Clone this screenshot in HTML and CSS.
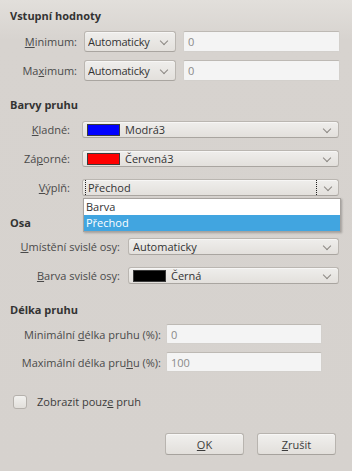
FILE: index.html
```html
<!DOCTYPE html>
<html lang="cs">
<head>
    <meta charset="UTF-8">
    <title>Datové pruhy</title>
    <link rel="stylesheet" href="styles.css">
</head>
<body>
    <div class="dialog">
        <h2 class="heading first">Vstupní hodnoty</h2>
        <div class="grid grid-input">
            <label><u>M</u>inimum:</label>
            <div class="combo"><span class="combo-text">Automaticky</span><span class="arrow"></span></div>
            <div class="field">0</div>

            <label>Ma<u>x</u>imum:</label>
            <div class="combo"><span class="combo-text">Automaticky</span><span class="arrow"></span></div>
            <div class="field">0</div>
        </div>

        <h2 class="heading bars">Barvy pruhu</h2>
        <div class="grid grid-bars">
            <label><u>K</u>ladné:</label>
            <div class="combo"><span class="swatch blue"></span><span class="combo-text">Modrá3</span><span class="arrow"></span></div>

            <label>Zá<u>p</u>orné:</label>
            <div class="combo"><span class="swatch red"></span><span class="combo-text">Červená3</span><span class="arrow"></span></div>

            <label><u>V</u>ýplň:</label>
            <div class="combo focused"><span class="combo-text">Přechod</span><span class="arrow"></span></div>
        </div>

        <h2 class="heading axis">Osa</h2>
        <div class="grid grid-axis">
            <label><u>U</u>místění svislé osy:</label>
            <div class="combo"><span class="combo-text">Automaticky</span><span class="arrow"></span></div>

            <label><u>B</u>arva svislé osy:</label>
            <div class="combo"><span class="swatch black"></span><span class="combo-text">Černá</span><span class="arrow"></span></div>
        </div>

        <h2 class="heading length">Délka pruhu</h2>
        <div class="grid grid-length">
            <label>Minimální <u>d</u>élka pruhu (%):</label>
            <div class="field">0</div>

            <label>Maximální délka pru<u>h</u>u (%):</label>
            <div class="field">100</div>
        </div>

        <div class="check-row">
            <span class="checkbox"></span>
            <span>Zobrazit pouz<u>e</u> pruh</span>
        </div>

        <div class="buttons">
            <button><u>O</u>K</button>
            <button><u>Z</u>rušit</button>
        </div>

        <ul class="popup">
            <li>Barva</li>
            <li class="selected">Přechod</li>
        </ul>
    </div>
</body>
</html>
```

FILE: styles.css
```css
body {
    margin: 0;
    font-family: "Open Sans", "DejaVu Sans", sans-serif;
    font-size: 11px;
    color: #3c3c3c;
    background: linear-gradient(#e2dfdb, #d7d3cf 40px, #d6d2ce);
    height: 471px;
    overflow: hidden;
}

.dialog {
    position: relative;
    padding: 8px 0 0 10px;
}

.heading {
    margin: 0;
    font-size: 11px;
    font-weight: bold;
    line-height: 16px;
    color: #333;
}

.heading.bars { margin-top: 16px; }
.heading.axis { margin-top: 19px; }
.heading.length { margin-top: 18px; }

.grid {
    display: grid;
    align-items: center;
}

.grid label {
    text-align: right;
    color: #4a4a4a;
}

.grid-input {
    margin-top: 7px;
    grid-template-columns: 67px 92px 157px;
    column-gap: 7px;
    row-gap: 8px;
    grid-auto-rows: 21px;
}

.grid-input .combo {
    padding-left: 3px;
    letter-spacing: -0.2px;
}

.grid-input .arrow {
    width: 19px;
}

.grid-input .arrow::after {
    left: 5px;
}

.grid-bars {
    margin-top: 8px;
    grid-template-columns: 60px 257px;
    column-gap: 12px;
    row-gap: 12px;
    grid-auto-rows: 17px;
}

.grid-axis {
    margin-top: 7px;
    grid-template-columns: 110px 211px;
    column-gap: 8px;
    row-gap: 12px;
    grid-auto-rows: 17px;
}

.grid-length {
    margin-top: 6px;
    grid-template-columns: 151px 156px;
    column-gap: 5px;
    row-gap: 8px;
    grid-auto-rows: 20px;
}

.combo {
    display: flex;
    align-items: center;
    height: 100%;
    box-sizing: border-box;
    padding-left: 4px;
    border: 1px solid #bab6b1;
    border-bottom-color: #a9a5a0;
    border-radius: 3px;
    background: linear-gradient(#efeeec, #e3e0dc);
    box-shadow: inset 0 1px 0 #f7f6f5;
    color: #333;
}

.combo-text {
    flex: 1;
    white-space: nowrap;
    overflow: hidden;
}

.arrow {
    width: 22px;
    height: 100%;
    position: relative;
}

.arrow::after {
    content: "";
    position: absolute;
    left: 8px;
    top: 50%;
    width: 5px;
    height: 5px;
    margin-top: -4px;
    border-right: 1.3px solid #8c8883;
    border-bottom: 1.3px solid #8c8883;
    transform: rotate(45deg);
}

.focused {
    padding-left: 2px;
}

.focused .combo-text {
    border-left: 1px dotted #222;
    padding-left: 2px;
    height: 100%;
    line-height: 15px;
}

.focused .arrow {
    border-left: 1px dotted #222;
    box-sizing: border-box;
}

.swatch {
    width: 33px;
    height: 12px;
    box-sizing: border-box;
    border: 1px solid #3b3b3b;
    margin-right: 5px;
}

.blue { background: #0000ff; }
.red { background: #ff0000; }
.black { background: #000; }

.field {
    height: 100%;
    box-sizing: border-box;
    padding: 0 4px;
    display: flex;
    align-items: center;
    background: #f4f4f4;
    border: 1px solid #d3d0cc;
    border-top-color: #bdb9b4;
    border-radius: 2px;
    color: #8a8a8a;
}

.check-row {
    display: flex;
    align-items: center;
    gap: 10px;
    margin-top: 22px;
    padding-left: 3px;
    color: #3c3c3c;
}

.checkbox {
    width: 14px;
    height: 14px;
    box-sizing: border-box;
    border: 1px solid #b5b1ac;
    border-radius: 3px;
    background: linear-gradient(#f2f1ef, #e2dfdb);
}

.buttons {
    display: flex;
    justify-content: flex-end;
    gap: 13px;
    margin-top: 24px;
    padding-right: 16px;
}

.buttons button {
    width: 79px;
    height: 22px;
    font-family: inherit;
    font-size: 11px;
    color: #3c3c3c;
    border: 1px solid #b8b4af;
    border-bottom-color: #a6a29d;
    border-radius: 3px;
    background: linear-gradient(#f1f0ee, #e2dfdb);
    box-shadow: inset 0 1px 0 #f8f7f6;
    padding: 0;
}

.popup {
    position: absolute;
    left: 83px;
    top: 198px;
    width: 258px;
    margin: 0;
    padding: 0;
    list-style: none;
    box-sizing: border-box;
    background: #fff;
    border: 1px solid #a7a39f;
    box-shadow: 1px 1px 2px rgba(0, 0, 0, 0.25);
}

.popup li {
    height: 16px;
    line-height: 16px;
    padding-left: 2px;
    color: #333;
}

.popup li.selected {
    background: #41a5e0;
    color: #fff;
}
```
